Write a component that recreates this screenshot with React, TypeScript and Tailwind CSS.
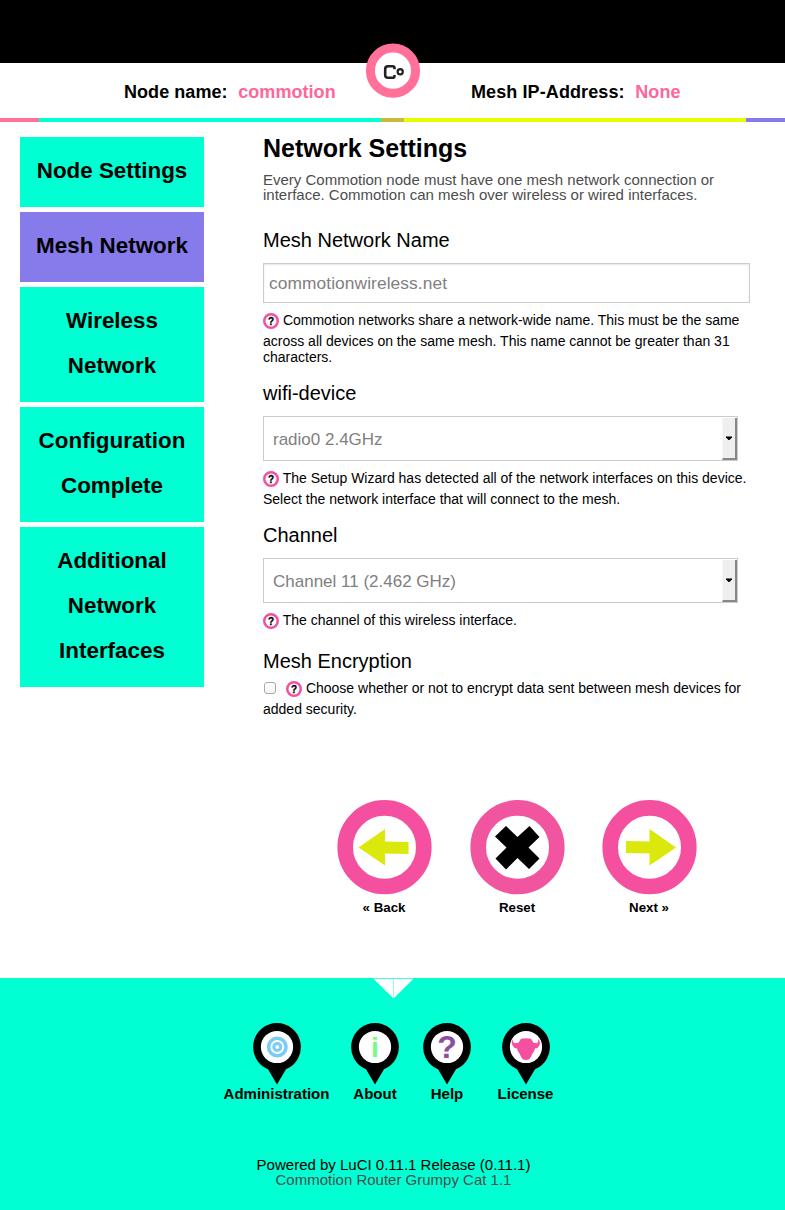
import React from "react";

const steps: { lines: string[]; active?: boolean }[] = [
  { lines: ["Node Settings"] },
  { lines: ["Mesh Network"], active: true },
  { lines: ["Wireless", "Network"] },
  { lines: ["Configuration", "Complete"] },
  { lines: ["Additional", "Network", "Interfaces"] },
];

function Logo() {
  return (
    <svg className="absolute left-[365px] top-[43px]" width="56" height="56" viewBox="0 0 56 56">
      <circle cx="28" cy="27.7" r="22.6" fill="#fff" stroke="#ff7199" strokeWidth="9" />
      <path
        d="M29.5 26.2 V25 Q29.5 23.2 27.6 23.2 H23 Q20.2 23.2 20.2 26 V32 Q20.2 34.8 23 34.8 H27.6 Q29.5 34.8 29.5 33 V32"
        fill="none"
        stroke="#222"
        strokeWidth="2.6"
      />
      <circle cx="35.2" cy="28.7" r="2.6" fill="none" stroke="#222" strokeWidth="2.2" />
    </svg>
  );
}

function Header() {
  return (
    <header className="relative">
      <div className="h-[63px] bg-black" />
      <div className="flex h-[55px] text-[18px] font-bold leading-[20px] pt-[19px] pl-[124px]">
        <div className="w-[347px] whitespace-nowrap tracking-[0.06px]">
          Node name: <span className="ml-[5.5px] text-[#ff6699]">commotion</span>
        </div>
        <div className="whitespace-nowrap tracking-[0.1px]">
          Mesh IP-Address: <span className="ml-[5.5px] text-[#ff6699]">None</span>
        </div>
      </div>
      <div className="flex h-1">
        <div className="w-[39px] bg-[#ff7199]" />
        <div className="w-[342px] bg-[#00ffd2]" />
        <div className="w-[23px] bg-[#c9b93c]" />
        <div className="w-[342px] bg-[#e8ff00]" />
        <div className="flex-1 bg-[#877beb]" />
      </div>
      <Logo />
    </header>
  );
}

function HelpIcon() {
  return (
    <svg className="inline-block align-[-8px] mb-1" width="16" height="16" viewBox="0 0 16 16">
      <circle cx="8" cy="8" r="6.75" fill="#fff" stroke="#f4509f" strokeWidth="2.5" />
      <text x="8" y="11.5" textAnchor="middle" fontSize="10" fontWeight="bold" stroke="#000" strokeWidth="0.3">
        ?
      </text>
    </svg>
  );
}

function Label({ children, className }: { children: React.ReactNode; className: string }) {
  return <h3 className={"text-[20px] leading-[24px] " + className}>{children}</h3>;
}

function Help({ children, before }: { children: React.ReactNode; before?: React.ReactNode }) {
  return (
    <div className="whitespace-nowrap text-[14px] leading-[16px]">
      {before}
      <HelpIcon /> {children}
    </div>
  );
}

function SelectBox({ children }: { children: React.ReactNode }) {
  return (
    <div className="mt-[11px] mb-[9px] flex h-[45px] w-[475px] border border-[#ccc] bg-white">
      <div className="flex-1 pl-[9px] text-[17px] leading-[45px] text-[#808080]">{children}</div>
      <div className="mt-px flex w-[15px] items-center justify-center border-b-2 border-l border-r-2 border-b-[#888] border-l-[#f5f5f5] border-r-[#888] bg-[#efefef]">
        <svg width="6" height="4" viewBox="0 0 6 4">
          <path d="M0 0.5H6V1.2L3.5 4H2.5L0 1.2Z" fill="#000" />
        </svg>
      </div>
    </div>
  );
}

function RoundButton({ label, children, color }: { label: string; children: React.ReactNode; color: string }) {
  return (
    <button className="flex w-[95px] flex-col items-center">
      <svg width="95" height="95" viewBox="0 0 95 95">
        <circle cx="47.5" cy="47.2" r="39.3" fill="#fff" stroke={color} strokeWidth="15.6" />
        {children}
      </svg>
      <span className="mt-[5px] mr-px whitespace-nowrap text-[13.3px] font-bold leading-[16px]">{label}</span>
    </button>
  );
}

function Pin({ label, children, className }: { label: string; children: React.ReactNode; className: string }) {
  return (
    <a className={"flex flex-col items-center " + className}>
      <svg width="50" height="63" viewBox="0 0 50 63">
        <path d="M25 1a24 24 0 0 1 9 46.2L25 62.5L16 47.2A24 24 0 0 1 25 1Z" fill="#000" />
        <circle cx="25" cy="25" r="16.1" fill="#fff" />
        {children}
      </svg>
      <span className="whitespace-nowrap text-[15px] font-bold leading-[17px]">{label}</span>
    </a>
  );
}

export default function App() {
  return (
    <div className="h-[1210px] w-[785px] overflow-hidden bg-white font-['Liberation_Sans',Arial,sans-serif] text-black">
      <Header />
      <div className="flex h-[856px]">
        <nav className="ml-5 mt-[15px] flex w-[184px] flex-col gap-[5px]">
          {steps.map((s) => (
            <a
              key={s.lines.join(" ")}
              className={
                "block pt-[11px] pb-[14px] text-center text-[22.4px] font-bold leading-[45px] " +
                (s.active ? "bg-[#877beb]" : "bg-[#00ffd2]")
              }
            >
              {s.lines.map((l) => (
                <span key={l} className="block">
                  {l}
                </span>
              ))}
            </a>
          ))}
        </nav>
        <main className="ml-[59px] w-[500px] pt-[11px]">
          <h2 className="text-[25px] font-bold leading-[30px]">Network Settings</h2>
          <p className="mt-[9px] text-[15px] leading-[15px] text-[#4d4d4d]">
            Every Commotion node must have one mesh network connection or
            <br />
            interface. Commotion can mesh over wireless or wired interfaces.
          </p>
          <Label className="mt-[26px]">Mesh Network Name</Label>
          <div className="mt-[11px] mb-[9px] h-[40px] w-[487px] border border-[#ccc] pl-[5px] text-[17.35px] leading-[39px] tracking-[0.08px] text-[#808080] shadow-[inset_0_1px_2px_rgba(0,0,0,0.1)]">
            commotionwireless.net
          </div>
          <Help>
            Commotion networks share a network-wide name. This must be the same
            <br />
            across all devices on the same mesh. This name cannot be greater than 31
            <br />
            characters.
          </Help>
          <Label className="mt-[16px]">wifi-device</Label>
          <SelectBox>radio0 2.4GHz</SelectBox>
          <Help>
            The Setup Wizard has detected all of the network interfaces on this device.
            <br />
            Select the network interface that will connect to the mesh.
          </Help>
          <Label className="mt-[16px]">Channel</Label>
          <SelectBox>Channel 11 (2.462 GHz)</SelectBox>
          <Help>The channel of this wireless interface.</Help>
          <Label className="mt-[16px] mb-[7px]">Mesh Encryption</Label>
          <Help
            before={
              <span className="ml-px mr-[10px] inline-block h-[12px] w-[12px] rounded-[3px] border border-[#a8a8a8] bg-gradient-to-b from-white to-[#f4f4f4] align-[-1px]" />
            }
          >
            Choose whether or not to encrypt data sent between mesh devices for
            <br />
            added security.
          </Help>
          <div className="mt-[83px] ml-[74px] flex">
            <RoundButton label="« Back" color="#f5509f">
              <path d="M21.5 47.5L48 29V41.5L71.5 42V54L48 53.5V65.5Z" fill="#dae80c" />
            </RoundButton>
            <div className="w-[38px]" />
            <RoundButton label="Reset" color="#f1559f">
              <path
                d="M36 26L47.5 37L59.5 26L69.5 37L58.5 47.5L69.5 58.5L59 69L47.5 58L36 69.5L25.5 58.5L36.5 47.5L25 36.5Z"
                fill="#000"
              />
            </RoundButton>
            <div className="w-[37px]" />
            <RoundButton label="Next »" color="#f5509f">
              <path d="M74 47.5L47.5 29V41.5L24 41V53L47.5 53.5V65.5Z" fill="#dae80c" />
            </RoundButton>
          </div>
        </main>
      </div>
      <footer className="h-[232px] bg-[#00ffd2]">
        <svg className="ml-[373px] block" width="41" height="21" viewBox="0 0 41 21">
          <path d="M0.5 0.8H20.3V20.3ZM20.7 0.8H40.5L20.7 20.3Z" fill="#fff" />
        </svg>
        <div className="ml-[224px] mt-[23px] flex">
          <Pin label="Administration" className="w-[105px]">
            <circle cx="25.3" cy="25" r="8.7" fill="none" stroke="#7accf5" strokeWidth="3.6" />
            <circle cx="25.3" cy="25" r="3.5" fill="none" stroke="#7accf5" strokeWidth="3" />
          </Pin>
          <Pin label="About" className="ml-[20px] w-[52px]">
            <text x="25" y="35" textAnchor="middle" fontSize="28.5" fontWeight="bold" fill="#76fb83">
              i
            </text>
          </Pin>
          <Pin label="Help" className="ml-[20px] w-[52px]">
            <text x="25" y="36.2" textAnchor="middle" fontSize="32" fontWeight="bold" fill="#8b4f9f">
              ?
            </text>
          </Pin>
          <Pin label="License" className="ml-[24.5px] w-[56px]">
            <path
              d="M11.6 17Q11.4 20.4 14 21.2L17.5 20.8L20 16.8Q25 15.6 30 16.8L32.5 20.8L35.5 21.2Q37.8 20.4 37.2 17Q40 20 38.4 23.6Q37.4 26.2 34 26.4Q33.6 29 31.8 31L29.6 35.5Q28.4 38 25 38Q21.6 38 20.4 35.5L18.2 31Q16.4 29 16 26.4Q12.6 26.2 11.6 23.6Q9.8 20 11.6 17Z"
              fill="#f5509f"
            />
          </Pin>
        </div>
        <div className="mt-[55px] pl-[2px] text-center text-[15px] leading-[15px]">
          <div>Powered by LuCI 0.11.1 Release (0.11.1)</div>
          <div className="text-[#4d4d4d]">Commotion Router Grumpy Cat 1.1</div>
        </div>
      </footer>
    </div>
  );
}
